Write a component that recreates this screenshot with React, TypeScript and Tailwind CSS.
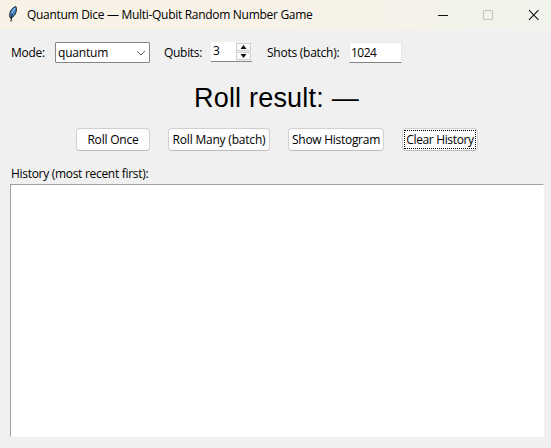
import type { ReactNode } from "react";

function Feather() {
  return (
    <svg width="14" height="18" viewBox="0 0 14 18" className="mb-[3px] ml-[6px] shrink-0">
      <path d="M4 12.5C2.9 8 5 3.2 9.8 1.5C11.5 5 9.6 10.5 5.4 13Z" fill="#4a92dc" stroke="#15181d" strokeWidth="1" />
      <path d="M8.3 5C6.3 8 5.3 11.5 5 16.5" fill="none" stroke="#15181d" strokeWidth="1.1" />
      <path d="M8.8 3L6.2 8.5" stroke="#8fc4f5" strokeWidth="1.2" />
    </svg>
  );
}

function TitleBar() {
  return (
    <header className="flex h-[30px] items-center bg-linear-to-r from-[#f9f2e6] via-[#f7f2e8] via-60% to-[#f0f3ec]">
      <Feather />
      <span className="ml-[7px] w-[300px] tracking-[-0.3px]">Quantum Dice — Multi-Qubit Random Number Game</span>
      <svg width="102" height="12" viewBox="0 0 102 12" className="mb-px ml-[111px] shrink-0" fill="none">
        <path d="M0 6.5H10" stroke="#111" />
        <rect x="45.5" y="1.5" width="9" height="9" rx="0.5" stroke="#c4c5c0" />
        <path d="M91 1.2L100.5 10.8M100.5 1.2L91 10.8" stroke="#111" strokeWidth="1.1" />
      </svg>
    </header>
  );
}

function Button({ className, children }: { className: string; children: ReactNode }) {
  return (
    <button className={`flex h-[23px] shrink-0 items-center justify-center rounded-[4px] border border-[#d0d0d0] border-b-[#bcbcbc] bg-[#fdfdfd] ${className}`}>
      {children}
    </button>
  );
}

export default function App() {
  return (
    <main className="flex h-[448px] w-[551px] flex-col overflow-hidden bg-[#f0f0f0] font-['Open_Sans','Noto_Sans',sans-serif] text-[12px] leading-4 whitespace-nowrap text-black">
      <TitleBar />
      <section className="mt-3 flex h-[21px] pl-[11px]">
        <label className="w-[44px] pt-[3px] tracking-[-0.3px]">Mode:</label>
        <div className="flex h-[21px] w-[95px] items-center justify-between rounded-[1px] border border-[#858585] bg-white pr-[3px] pl-[2px]">
          <span className="tracking-[-0.2px]">quantum</span>
          <svg width="10" height="6" viewBox="0 0 10 6" fill="none">
            <path d="M1 1L5 5L9 1" stroke="#666" />
          </svg>
        </div>
        <label className="ml-[14px] w-[47px] pt-[3px] tracking-[-0.3px]">Qubits:</label>
        <div className="flex h-5 w-[41px] border-b border-[#858585] bg-white pl-[2px]">
          <span className="w-[23px] pt-px">3</span>
          <div className="flex w-4 flex-col gap-px bg-[#f0f0f0] pt-px">
            {["M2.5 5H8.5L5.5 1Z", "M2.5 1H8.5L5.5 5Z"].map((d) => (
              <div key={d} className="flex h-2 w-[15px] items-center justify-center border border-[#cfcfcf] bg-[#fafafa]">
                <svg width="11" height="6" viewBox="0 0 11 6" className="shrink-0">
                  <path d={d} fill="#111" />
                </svg>
              </div>
            ))}
          </div>
        </div>
        <label className="ml-[15px] w-[82px] pt-[3px] tracking-[-0.25px]">Shots (batch):</label>
        <div className="h-[21px] w-[53px] border border-[#e8e8e8] border-b-[#858585] bg-white pt-[2px] pl-[1px] tracking-[-0.5px]">1024</div>
      </section>
      <h1 className="mt-[19px] h-8 pl-[194px] font-['Liberation_Sans',Arial,sans-serif] text-[27px] leading-8 tracking-[0.2px]">Roll result: —</h1>
      <section className="mt-[14px] flex gap-[18px] pl-[76px]">
        <Button className="w-[74px] tracking-[-0.2px]">Roll Once</Button>
        <Button className="w-[102px] tracking-[-0.2px]">Roll Many (batch)</Button>
        <Button className="w-[96px] tracking-[-0.28px]">Show Histogram</Button>
        <Button className="w-[76px] p-px tracking-[-0.35px]">
          <span className="flex h-[19px] w-[72px] items-center justify-center border border-dotted border-black">Clear History</span>
        </Button>
      </section>
      <label className="mt-[15px] h-[18px] pl-[11px] tracking-[-0.3px]">History (most recent first):</label>
      <div className="ml-[10px] h-[253px] w-[534px] border border-[#a0a0a0] border-r-white border-b-white bg-white" />
    </main>
  );
}
